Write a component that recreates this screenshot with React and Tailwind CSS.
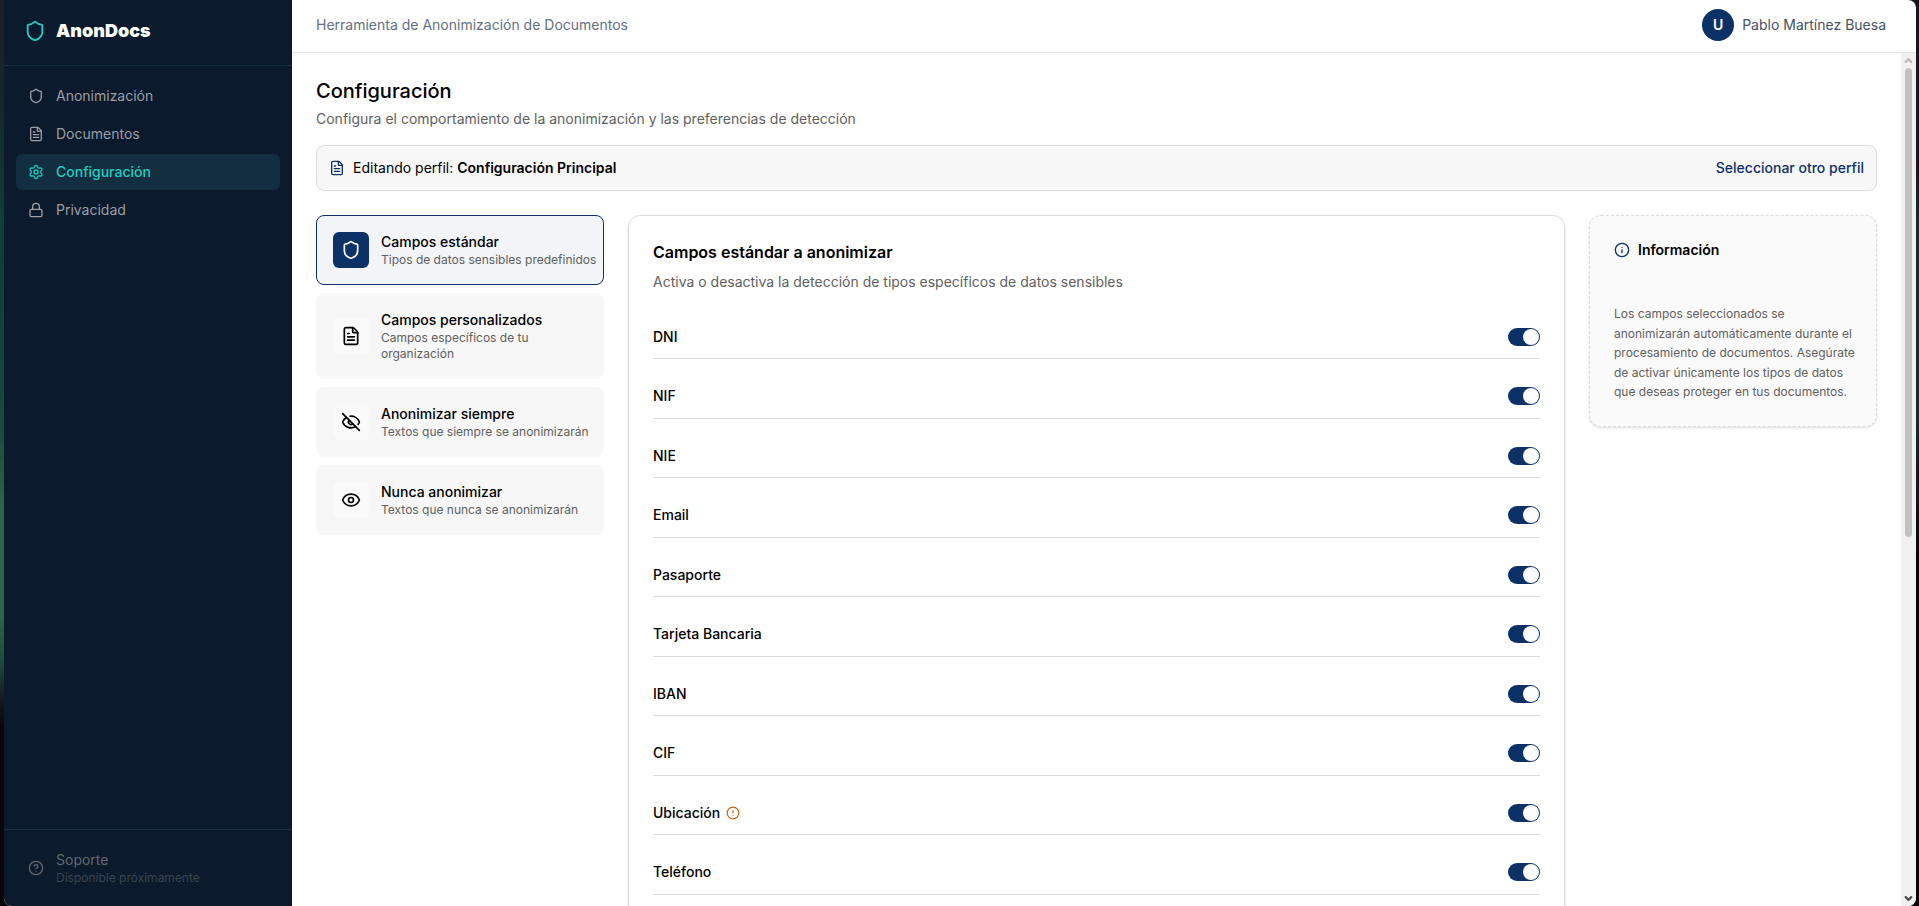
import { useState } from "react";
import {
  ChevronDown,
  ChevronUp,
  CircleAlert,
  CircleQuestionMark,
  Eye,
  EyeOff,
  FileText,
  Info,
  Lock,
  Settings,
  Shield,
} from "lucide-react";

const navItems = [
  { label: "Anonimización", icon: Shield },
  { label: "Documentos", icon: FileText },
  { label: "Configuración", icon: Settings },
  { label: "Privacidad", icon: Lock },
];

const sections = [
  {
    id: "standard",
    title: "Campos estándar",
    description: "Tipos de datos sensibles predefinidos",
    icon: Shield,
  },
  {
    id: "custom",
    title: "Campos personalizados",
    description: "Campos específicos de tu organización",
    icon: FileText,
  },
  {
    id: "always",
    title: "Anonimizar siempre",
    description: "Textos que siempre se anonimizarán",
    icon: EyeOff,
  },
  {
    id: "never",
    title: "Nunca anonimizar",
    description: "Textos que nunca se anonimizarán",
    icon: Eye,
  },
];

const fields = [
  { id: "dni", label: "DNI" },
  { id: "nif", label: "NIF" },
  { id: "nie", label: "NIE" },
  { id: "email", label: "Email" },
  { id: "pasaporte", label: "Pasaporte" },
  { id: "tarjeta", label: "Tarjeta Bancaria" },
  { id: "iban", label: "IBAN" },
  { id: "cif", label: "CIF" },
  { id: "ubicacion", label: "Ubicación", warning: true },
  { id: "telefono", label: "Teléfono" },
];

function Sidebar() {
  return (
    <aside className="w-72 shrink-0 flex flex-col bg-[#0b1a2c]">
      <div className="h-[66px] px-5 pb-1 flex items-center gap-2.5 border-b border-[#152f3f]">
        <Shield size={22} className="text-[#26ccbe]" />
        <span className="text-lg font-black text-white">AnonDocs</span>
      </div>

      <nav className="flex-1 p-3 flex flex-col gap-0.5">
        {navItems.map(({ label, icon: Icon }) => {
          const active = label === "Configuración";
          return (
            <a
              key={label}
              href="#"
              className={`px-3 py-2 rounded-md flex items-center gap-3 text-sm ${
                active
                  ? "bg-[#122e40] text-[#26ccbe] font-medium"
                  : "text-[#9b9ea6]"
              }`}
            >
              <Icon size={16} />
              {label}
            </a>
          );
        })}
      </nav>

      <div className="p-3 border-t border-[#152f3f]">
        <div className="px-3 py-2 flex items-center gap-3">
          <CircleQuestionMark size={16} className="text-[#62676f]" />
          <div>
            <div className="text-sm text-[#62676f]">Soporte</div>
            <div className="text-xs text-[#3a4552]">Disponible próximamente</div>
          </div>
        </div>
      </div>
    </aside>
  );
}

function SectionButton({ section, active, onClick }) {
  const Icon = section.icon;
  return (
    <button
      onClick={onClick}
      className={`w-full py-4 pl-4 pr-1 rounded-lg border flex items-center gap-3 text-left ${
        active ? "bg-[#f2f4f8] border-[#0c3166]" : "bg-[#f7f7f7] border-[#f7f7f7]"
      }`}
    >
      <span
        className={`size-9 shrink-0 rounded-md flex items-center justify-center ${
          active ? "bg-[#0c3166] text-white" : "bg-[#fafafa] text-black"
        }`}
      >
        <Icon size={20} />
      </span>
      <span className="min-w-0 flex-1">
        <span className="block text-sm font-medium text-black">
          {section.title}
        </span>
        <span className="block text-xs text-[#606060]">
          {section.description}
        </span>
      </span>
    </button>
  );
}

function FieldRow({ field, checked, onChange }) {
  return (
    <div className="py-3 even:pb-[13px] flex items-center justify-between border-b border-[#dcdcdc]">
      <div className="h-[18px] flex items-center gap-1.5">
        <label htmlFor={field.id} className="text-sm font-medium text-black">
          {field.label}
        </label>
        {field.warning && <CircleAlert size={14} className="text-[#c2640f]" />}
      </div>
      <input
        id={field.id}
        type="checkbox"
        role="switch"
        checked={checked}
        onChange={onChange}
        className="w-8 h-[18px] p-px shrink-0 appearance-none rounded-full flex justify-start checked:justify-end bg-gray-300 checked:bg-[#0c3166] before:size-4 before:rounded-full before:bg-[#fcfcfc]"
      />
    </div>
  );
}

export default function App() {
  const [section, setSection] = useState("standard");
  const [disabled, setDisabled] = useState({});

  const toggle = (id) => setDisabled((prev) => ({ ...prev, [id]: !prev[id] }));

  return (
    <div className="h-screen pl-1 pr-[3px] overflow-hidden relative bg-black font-['Inter',sans-serif]">
      {/* desktop wallpaper showing on both sides of the window */}
      <div className="absolute inset-y-0 left-0 w-4 bg-[linear-gradient(to_bottom,#1a2023_0%,#17282a_12%,#0f3d3a_24%,#12453d_40%,#1f4b3a_48%,#2b6648_56%,#2b6648_68%,#1f4b3a_73%,#151c20_77%,#0a0708_80%)]" />
      <div className="absolute inset-y-0 right-0 w-4 bg-[linear-gradient(to_bottom,#10181c_0%,#0f1a1f_18%,#0f2f30_24%,#0f3030_46%,#0d181c_54%,#050505_62%)]" />

      <div className="relative h-full flex overflow-hidden rounded-b-lg rounded-tr-lg bg-white">
        <Sidebar />

        <div className="flex-1 min-w-0 flex flex-col">
          <header className="h-[53px] shrink-0 pl-6 pr-[30px] pb-0.5 flex items-center justify-between border-b border-[#e4e5ea]">
            <span className="text-sm text-[#64707f]">
              Herramienta de Anonimización de Documentos
            </span>
            <div className="flex items-center gap-2">
              <span className="size-8 rounded-full bg-[#0c3166] text-white text-sm font-semibold flex items-center justify-center">
                U
              </span>
              <span className="text-sm text-[#46515f]">Pablo Martínez Buesa</span>
            </div>
          </header>

          <div className="flex-1 min-h-0 flex">
            <main className="flex-1 min-w-0 p-6 overflow-hidden">
              <h1 className="text-xl font-medium text-black">Configuración</h1>
              <p className="mt-1 text-sm text-[#606060]">
                Configura el comportamiento de la anonimización y las preferencias
                de detección
              </p>

              <div className="mt-4 px-3 py-3 rounded-lg border border-[#dcdcdc] bg-[#f7f7f7] flex items-center justify-between text-sm">
                <div className="flex items-center gap-2 text-black">
                  <FileText size={16} className="text-[#0c3166]" />
                  <span>
                    Editando perfil:{" "}
                    <strong className="font-semibold">
                      Configuración Principal
                    </strong>
                  </span>
                </div>
                <button className="font-medium text-[#0c3166]">
                  Seleccionar otro perfil
                </button>
              </div>

              <div className="mt-6 flex items-start gap-6">
                <div className="w-72 shrink-0 flex flex-col gap-2">
                  {sections.map((item) => (
                    <SectionButton
                      key={item.id}
                      section={item}
                      active={section === item.id}
                      onClick={() => setSection(item.id)}
                    />
                  ))}
                </div>

                <section className="flex-1 min-w-0 p-6 rounded-xl border border-[#dcdcdc] shadow-sm">
                  <h2 className="text-base font-semibold text-black">
                    Campos estándar a anonimizar
                  </h2>
                  <p className="mt-2 text-sm text-[#606060]">
                    Activa o desactiva la detección de tipos específicos de datos
                    sensibles
                  </p>
                  <div className="mt-6 flex flex-col gap-4">
                    {fields.map((field) => (
                      <FieldRow
                        key={field.id}
                        field={field}
                        checked={!disabled[field.id]}
                        onChange={() => toggle(field.id)}
                      />
                    ))}
                  </div>
                </section>

                <section className="w-72 shrink-0 py-6 pl-6 pr-4 rounded-xl border border-dashed border-[#dcdcdc] bg-[#fafafa] shadow-sm">
                  <h2 className="flex items-center gap-2 text-sm font-semibold text-black">
                    <Info size={16} className="text-[#0c3166]" />
                    Información
                  </h2>
                  <p className="mt-11 text-xs leading-relaxed text-[#606060]">
                    Los campos seleccionados se anonimizarán automáticamente durante
                    el procesamiento de documentos. Asegúrate de activar únicamente
                    los tipos de datos que deseas proteger en tus documentos.
                  </p>
                </section>
              </div>
            </main>

            {/* scrollbar */}
            <div className="w-[15px] shrink-0 flex flex-col items-center bg-[#f1f1f1]">
              <ChevronUp size={11} strokeWidth={5} className="mt-0.5 text-[#bcbcbc]" />
              <div className="mt-0.5 w-[7px] h-[55%] rounded-full bg-[#c1c1c1]" />
              <ChevronDown size={11} strokeWidth={5} className="mt-auto mb-0.5 text-[#505050]" />
            </div>
          </div>
        </div>
      </div>
    </div>
  );
}
